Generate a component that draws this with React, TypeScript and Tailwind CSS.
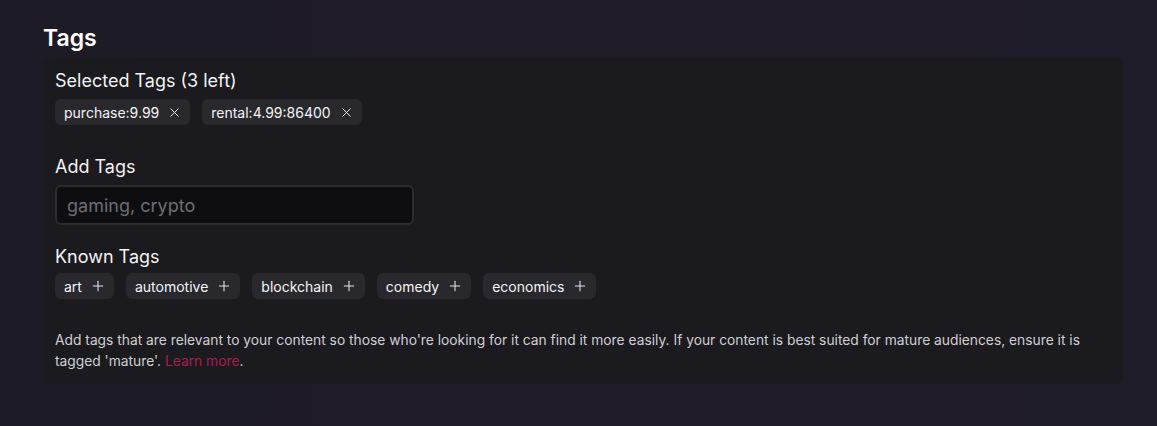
import { X, Plus } from 'lucide-react'

const selected = ['purchase:9.99', 'rental:4.99:86400']
const known = ['art', 'automotive', 'blockchain', 'comedy', 'economics']

function Chip({ label, icon }: { label: string; icon: 'x' | 'plus' }) {
  return (
    <button className="flex items-center gap-2 h-[26px] pl-[9px] pr-[8px] rounded-md bg-[#29282d] text-[14px] text-[#f4f4f6]">
      <span>{label}</span>
      {icon === 'x' ? (
        <X size={15} strokeWidth={1.6} className="text-[#e5e5e8]" />
      ) : (
        <Plus size={16} strokeWidth={1.6} className="text-[#e5e5e8]" />
      )}
    </button>
  )
}

export default function App() {
  return (
    <div
      className="min-h-[426px] w-full bg-gradient-to-r from-[#1d1b25] via-[#1f1c27] to-[#201d2a] pl-[43px] pr-[34px] pt-[24px]"
      style={{ fontFamily: 'Inter, "Noto Sans", sans-serif' }}
    >
      <h2 className="text-[23px] leading-[28px] font-semibold text-white mb-[5px]">Tags</h2>
      <div className="rounded-md bg-[#1b1a1f] px-3 pt-3 pb-3">
        <div className="text-[18px] leading-6 text-[#f3f3f5]">Selected Tags (3 left)</div>
        <div className="flex flex-wrap gap-3 mt-1.5">
          {selected.map((t) => (
            <Chip key={t} label={t} icon="x" />
          ))}
        </div>

        <div className="text-[18px] leading-6 text-[#f3f3f5] mt-[30px]">Add Tags</div>
        <input
          placeholder="gaming, crypto"
          className="mt-1.5 w-[359px] h-10 rounded-md bg-[#0e0e10] border-2 border-[#2c2b30] px-[10px] text-[18px] text-white placeholder:text-[#6e6d73] outline-none"
        />

        <div className="text-[18px] leading-6 text-[#f3f3f5] mt-5">Known Tags</div>
        <div className="flex flex-wrap gap-3 mt-1">
          {known.map((t) => (
            <Chip key={t} label={t} icon="plus" />
          ))}
        </div>

        <p className="mt-[31px] text-[13.8px] leading-[21px] text-[#cfcfd3]">
          Add tags that are relevant to your content so those who're looking for it can find it more easily. If your
          content is best suited for mature audiences, ensure it is tagged 'mature'.{' '}
          <a className="text-[#a3204f]">Learn more</a>.
        </p>
      </div>
    </div>
  )
}
